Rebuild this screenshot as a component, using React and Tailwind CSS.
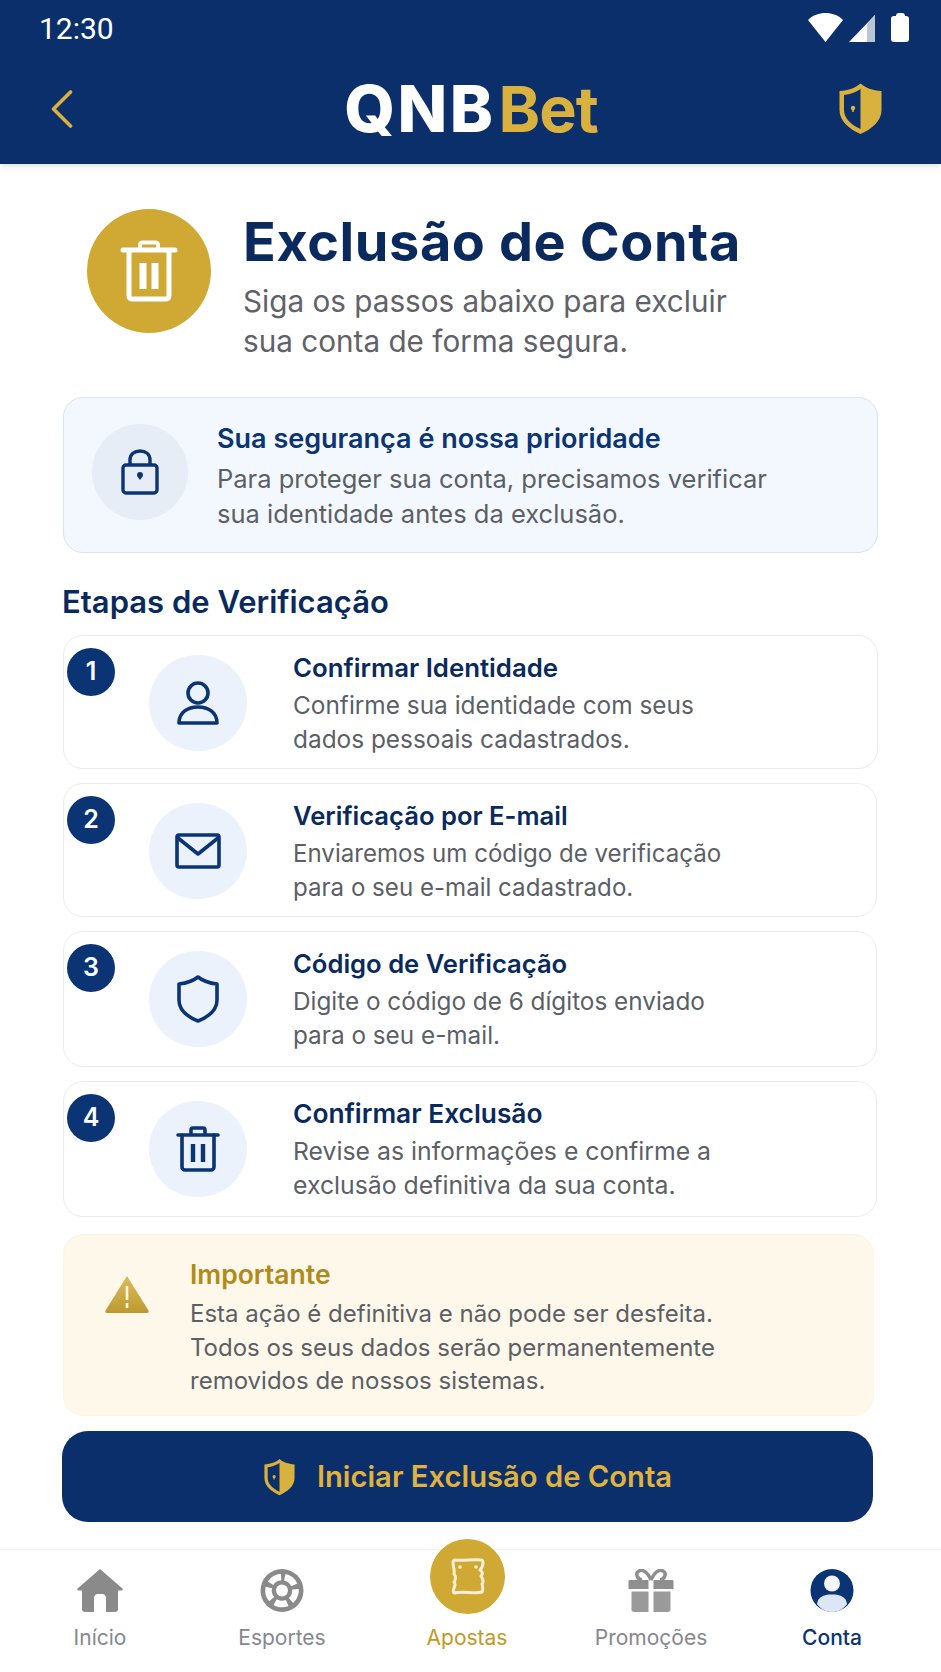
const STEPS = [
  { n: '1', title: 'Confirmar Identidade', lines: ['Confirme sua identidade com seus', 'dados pessoais cadastrados.'], icon: 'user', h: 'h-[134px]', w: 'w-[815px]', head: 'text-[25.8px]', body: 'text-[24.4px]' },
  { n: '2', title: 'Verificação por E-mail', lines: ['Enviaremos um código de verificação', 'para o seu e-mail cadastrado.'], icon: 'mail', h: 'h-[134px]', w: 'w-[814px]', head: 'text-[25.6px]', body: 'text-[24.1px]' },
  { n: '3', title: 'Código de Verificação', lines: ['Digite o código de 6 dígitos enviado', 'para o seu e-mail.'], icon: 'shield', h: 'h-[136px]', w: 'w-[814px]', head: 'text-[25.6px]', body: 'text-[24.3px]' },
  { n: '4', title: 'Confirmar Exclusão', lines: ['Revise as informações e confirme a', 'exclusão definitiva da sua conta.'], icon: 'trash', h: 'h-[136px]', w: 'w-[814px]', head: 'text-[26.3px]', body: 'text-[24.8px]' },
]

// Gold shield with keyhole, used in the header and on the button
function GoldShield({ className }) {
  return (
    <svg viewBox="0 0 45 53" className={className}>
      <path d="M22.5 1.5 C28 6 34 8.5 43.5 9 V28 C43.5 39 34 47 22.5 52 C11 47 1.5 39 1.5 28 V9 C11 8.5 17 6 22.5 1.5 Z" fill="#d9b13f" />
      <path d="M22.5 7 C18 10 12 12.5 6 13 V28 C6 36 13 43 22.5 47 Z" fill="#0b2f6b" />
      <circle cx="15" cy="26" r="2.2" fill="#d9b13f" />
      <rect x="14.2" y="26" width="1.6" height="4" fill="#d9b13f" />
    </svg>
  )
}

function StepIcon({ name }) {
  const common = { fill: 'none', stroke: '#0b3474', strokeWidth: 3.6, strokeLinejoin: 'round', strokeLinecap: 'round' }
  if (name === 'user') {
    return (
      <svg viewBox="0 0 42 44" className="w-[42px] h-[44px]" {...common}>
        <circle cx="21" cy="12" r="10" />
        <path d="M2 42 C2 31 11 26 21 26 C31 26 40 31 40 42 Z" />
      </svg>
    )
  }
  if (name === 'mail') {
    return (
      <svg viewBox="0 0 46 36" className="w-[46px] h-[36px]" {...common}>
        <rect x="2" y="2" width="42" height="32" rx="2" />
        <path d="M3 5 L23 21 L43 5" />
      </svg>
    )
  }
  if (name === 'shield') {
    return (
      <svg viewBox="0 0 42 48" className="w-[42px] h-[48px]" {...common}>
        <path d="M21 2 C26 6 31 8 40 9 V25 C40 35 31 42 21 46 C11 42 2 35 2 25 V9 C11 8 16 6 21 2 Z" />
      </svg>
    )
  }
  return (
    <svg viewBox="0 0 44 46" className="w-[44px] h-[46px]" {...common}>
      <path d="M2 9 H42" />
      <path d="M15 8 V4 C15 2.5 16 2 17 2 H27 C28 2 29 2.5 29 4 V8" />
      <path d="M6 9 V41 C6 43 7.5 44 9 44 H35 C36.5 44 38 43 38 41 V9" />
      <path d="M17 18 V36 M27 18 V36" strokeWidth="4.4" strokeLinecap="butt" />
    </svg>
  )
}

function BottomNav() {
  return (
    <nav className="relative shrink-0 h-[123px] border-t border-[#f3f3f3] bg-white pl-[9px] grid grid-cols-[182px_182px_188px_180px_182px]">
      <NavItem label="Início" color="text-[#85888d]">
        <svg viewBox="0 0 46 43" className="w-[46px] h-[43px]">
          <path d="M23 0 L46 20 L45 21.5 H41 V40 C41 42 40 43 38 43 H29 V29 C29 27 27.5 25 25.5 25 H20.5 C18.5 25 17 27 17 29 V43 H8 C6 43 5 42 5 40 V21.5 H1 L0 20 Z" fill="#8a8a8a" />
        </svg>
      </NavItem>
      <NavItem label="Esportes" color="text-[#85888d]">
        <svg viewBox="0 0 44 43" className="w-[44px] h-[43px]">
          <circle cx="22" cy="21.5" r="21.5" fill="#8a8a8a" />
          <circle cx="22" cy="21.5" r="13.5" fill="none" stroke="#fff" strokeWidth="6.5" strokeDasharray="12.5 4.5" transform="rotate(-78 22 21.5)" />
          <circle cx="22" cy="21.5" r="6" fill="#fff" />
        </svg>
      </NavItem>
      <NavItem label="Apostas" color="text-[#c29a22]">
        <div className="w-[46px] h-[43px]" />
      </NavItem>
      <NavItem label="Promoções" color="text-[#85888d]">
        <svg viewBox="0 0 46 43" className="w-[46px] h-[43px]">
          <path d="M23 11 C19 2 14 0 11 2 C7 4 9 10 14 11 M23 11 C27 2 32 0 35 2 C39 4 37 10 32 11" fill="none" stroke="#8f8f8f" strokeWidth="3.5" />
          <path d="M2 11 H20.5 V20 H0.5 V12.5 C0.5 11.5 1 11 2 11 Z M25.5 11 H44 C45 11 45.5 11.5 45.5 12.5 V20 H25.5 Z" fill="#8f8f8f" />
          <path d="M3.5 22.5 H20.5 V43 H6 C4.5 43 3.5 42 3.5 40.5 Z M25.5 22.5 H42.5 V40.5 C42.5 42 41.5 43 40 43 H25.5 Z" fill="#9a9a9a" />
        </svg>
      </NavItem>
      <NavItem label="Conta" color="text-[#0b3474] font-medium">
        <svg viewBox="0 0 46 43" className="w-[46px] h-[43px]">
          <circle cx="23" cy="21.5" r="21.5" fill="#0b3474" />
          <circle cx="23" cy="14.5" r="8" fill="#f4f6fa" />
          <path d="M8 35 C9 28 14 25.5 23 25.5 C32 25.5 37 28 38 35 C34 40.5 29 43 23 43 C17 43 12 40.5 8 35 Z" fill="#dde6f5" />
        </svg>
      </NavItem>
      {/* raised bet button sits over the top edge of the bar */}
      <div className="absolute left-[430px] top-[-11px] w-[75px] h-[75px] rounded-full bg-[#d0a935] flex items-center justify-center">
        <svg viewBox="0 0 34 37" className="w-[34px] h-[37px]">
          <path d="M4 2 C10 3 24 1 30 2 C32 2 32 3 32 5 C32 8 31 10 29 12 C32 14 32 16 30 18 C32 21 33 24 31 26 C32 29 32 33 31 34 C25 36 10 33 4 35 C2 35 2 33 3 30 C4 28 5 26 3 24 C5 21 5 18 3 16 C4 13 2 8 2 5 C2 3 3 2 4 2 Z" fill="none" stroke="#f8f0d6" strokeWidth="3" strokeLinejoin="round" />
          <circle cx="9" cy="9" r="1.8" fill="#f8f0d6" />
          <circle cx="25" cy="9" r="1.8" fill="#f8f0d6" />
        </svg>
      </div>
    </nav>
  )
}

function NavItem({ label, color, children }) {
  return (
    <div className="flex flex-col items-center pt-[19px]">
      {children}
      <span className={`mt-[12px] text-[21px] leading-[28px] ${color}`}>{label}</span>
    </div>
  )
}

export default function App() {
  return (
    <div className="w-[941px] h-[1672px] overflow-hidden flex flex-col bg-white font-['Inter',sans-serif]">
      {/* Status bar + app bar */}
      <header className="shrink-0 h-[164px] bg-[#0b2f6b] shadow-[0_2px_6px_rgba(0,0,0,0.12)] z-10">
        <div className="h-[56px] flex items-start justify-between pl-[39px] pr-[32px]">
          <span className="mt-[11px] font-['Roboto',sans-serif] text-[30px] leading-[35px] text-white">12:30</span>
          <div className="flex items-start mt-[13px]">
            <svg viewBox="0 0 35 29" className="w-[35px] h-[29px]">
              <path d="M17.5 0 C24 0 30 2 35 7 L17.5 29 L0 7 C5 2 11 0 17.5 0 Z" fill="#fff" />
            </svg>
            <svg viewBox="0 0 26 27" className="w-[26px] h-[27px] ml-[6px] mt-[2px]">
              <path d="M26 0 V27 H0 Z" fill="#fff" />
              <path d="M26 0 V27 H18 V9 Z" fill="#b9c4d6" />
            </svg>
            <div className="ml-[16px] flex flex-col items-center">
              <div className="w-[9px] h-[3px] bg-white rounded-t-sm" />
              <div className="w-[18px] h-[26px] bg-white rounded-[3px]" />
            </div>
          </div>
        </div>
        <div className="relative flex items-center justify-center h-[108px]">
          <svg viewBox="0 0 22 38" className="absolute left-[51px] top-[34px] w-[22px] h-[38px]" fill="none" stroke="#d9b13f" strokeWidth="3.6" strokeLinecap="round" strokeLinejoin="round">
            <path d="M19.5 2 L2.5 19 L19.5 36" />
          </svg>
          <div className="text-[65px] leading-[70px] font-extrabold whitespace-nowrap -mt-[3px] ml-[1px]">
            <span className="text-white tracking-[2.5px]">QNB</span>
            <span className="text-[#d9b13f] font-bold text-[63px] tracking-[-1px] ml-[3px]">Bet</span>
          </div>
          <GoldShield className="absolute left-[838px] top-[26px] w-[45px] h-[53px]" />
        </div>
      </header>

      <main className="flex-1 min-h-0 pl-[63px]">
        {/* Title */}
        <section className="flex items-start pl-[24px] pt-[45px]">
          <div className="w-[124px] h-[124px] rounded-full bg-[#d0a935] flex items-center justify-center shrink-0">
            <svg viewBox="0 0 58 62" className="w-[58px] h-[62px]" fill="none" stroke="#fff" strokeWidth="5" strokeLinecap="round" strokeLinejoin="round">
              <path d="M3 10 H55" />
              <path d="M20 9 V5 C20 3 21 2.5 23 2.5 H35 C37 2.5 38 3 38 5 V9" strokeWidth="4" />
              <path d="M9 11 V55 C9 58 10.5 59 12 59 H46 C47.5 59 49 58 49 55 V11" />
              <path d="M23 23 V49 M35 23 V49" strokeWidth="7" strokeLinecap="butt" />
            </svg>
          </div>
          <div className="ml-[32px] mt-[3px]">
            <h1 className="text-[54px] leading-[60px] font-bold tracking-[0.6px] text-[#0a2a5e] whitespace-nowrap">Exclusão de Conta</h1>
            <p className="mt-[9px] text-[29.7px] leading-[40px] text-[#5f6268] whitespace-nowrap">
              Siga os passos abaixo para excluir<br />sua conta de forma segura.
            </p>
          </div>
        </section>

        {/* Security notice */}
        <section className="mt-[36px] w-[815px] h-[156px] rounded-[20px] border-[1.5px] border-[#d7e4f5] bg-[#f3f8fe] flex items-start pl-[28px] pt-[24px]">
          <div className="w-[96px] h-[96px] mt-[2px] rounded-full bg-[#e6edf7] flex items-center justify-center shrink-0">
            <svg viewBox="0 0 38 46" className="w-[38px] h-[46px]" fill="none" stroke="#0b3474" strokeWidth="3.4" strokeLinejoin="round">
              <rect x="2" y="16" width="34" height="28" rx="3" />
              <path d="M9 16 V11 C9 5 13.5 2 19 2 C24.5 2 29 5 29 11 V16" />
              <path d="M19 26 m-3 0 a3 3 0 1 1 6 0 c0 1.5 -1.5 3 -3 5 c-1.5 -2 -3 -3.5 -3 -5 Z" fill="#0b3474" stroke="none" />
            </svg>
          </div>
          <div className="ml-[29px] whitespace-nowrap">
            <h2 className="text-[27px] leading-[34px] font-semibold text-[#0b3474]">Sua segurança é nossa prioridade</h2>
            <p className="mt-[5px] text-[25.5px] leading-[35px] text-[#5c5f66]">
              Para proteger sua conta, precisamos verificar<br />sua identidade antes da exclusão.
            </p>
          </div>
        </section>

        <h2 className="mt-[29px] -ml-[1px] text-[31px] leading-[40px] font-semibold text-[#0a2a5e]">Etapas de Verificação</h2>

        {/* Steps */}
        <div className="mt-[13px] flex flex-col gap-[14px]">
          {STEPS.map(step => (
            <div key={step.n} className={`${step.w} ${step.h} rounded-[20px] border-[1.5px] border-[#ececec] bg-white flex items-start pl-[3px] pt-[12px]`}>
              <div className="w-[48px] h-[48px] rounded-full bg-[#0b3474] text-white text-[25px] font-semibold flex items-center justify-center shrink-0">{step.n}</div>
              <div className="ml-[34px] mt-[7px] w-[98px] h-[96px] rounded-full bg-[#ebf2fb] flex items-center justify-center shrink-0">
                <StepIcon name={step.icon} />
              </div>
              <div className="ml-[46px] mt-[3px] whitespace-nowrap">
                <h3 className={`${step.head} leading-[34px] font-semibold text-[#0a2a5e]`}>{step.title}</h3>
                <p className={`mt-[4px] ${step.body} leading-[33.5px] text-[#5c5f66]`}>
                  {step.lines[0]}<br />{step.lines[1]}
                </p>
              </div>
            </div>
          ))}
        </div>

        {/* Warning */}
        <section className="mt-[17px] w-[811px] h-[182px] rounded-[20px] border border-[#fcf5e2] bg-[#fef8ea] flex items-start pl-[41px] pt-[22px]">
          <svg viewBox="0 0 44 38" className="w-[44px] h-[38px] mt-[18px] shrink-0">
            <defs>
              <linearGradient id="warn" x1="0" y1="0" x2="0" y2="1">
                <stop offset="0" stopColor="#dcbb5c" />
                <stop offset="1" stopColor="#bd9a2f" />
              </linearGradient>
            </defs>
            <path d="M22 1 L43.5 35.5 C44 36.5 43.5 38 42 38 H2 C0.5 38 0 36.5 0.5 35.5 Z" fill="url(#warn)" />
            <path d="M22 11 V25 M22 28 V33" stroke="#fdf7e8" strokeWidth="2.6" />
          </svg>
          <div className="ml-[41px] whitespace-nowrap">
            <h2 className="text-[26.5px] leading-[34px] font-semibold text-[#b08a1a]">Importante</h2>
            <p className="mt-[6px] text-[24px] leading-[33.5px] text-[#5c5f66]">
              Esta ação é definitiva e não pode ser desfeita.<br />
              Todos os seus dados serão permanentemente<br />
              removidos de nossos sistemas.
            </p>
          </div>
        </section>

        <button className="mt-[15px] -ml-[1px] w-[811px] h-[91px] rounded-[26px] bg-[#0b2f6b] flex items-center justify-center">
          <GoldShield className="w-[33px] h-[38px]" />
          <span className="ml-[21px] text-[29.2px] font-semibold text-[#e0b23e]">Iniciar Exclusão de Conta</span>
        </button>
      </main>

      <BottomNav />
    </div>
  )
}
